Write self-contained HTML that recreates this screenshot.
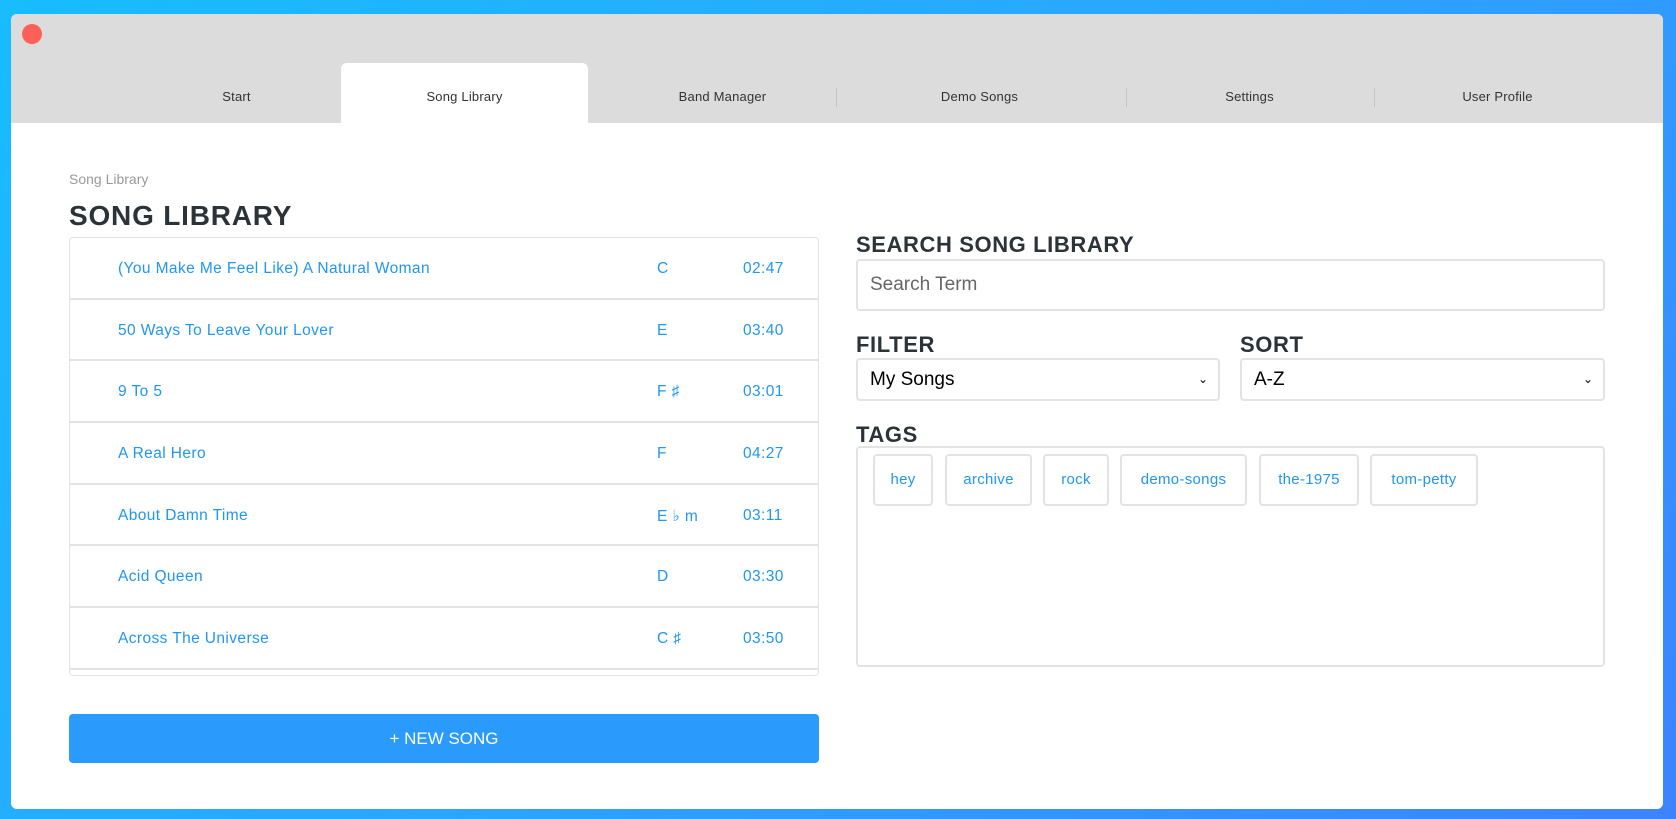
<!DOCTYPE html>
<html><head><meta charset="utf-8"><style>
*{box-sizing:border-box;margin:0;padding:0}
body{width:1676px;height:819px;overflow:hidden;background:linear-gradient(135deg,#18bcff 0%,#2aa6ff 50%,#3c84ff 100%);font-family:"Liberation Sans",sans-serif;position:relative}
.win{position:absolute;left:11px;top:14px;width:1652px;height:795px;background:#fff;border-radius:6px;overflow:hidden}
.hdr{position:absolute;left:0;top:0;width:100%;height:109px;background:#dcdcdc}
.dot{position:absolute;left:11px;top:10px;width:20px;height:20px;border-radius:50%;background:#fe5f57}
.tab{position:absolute;top:49px;height:60px;width:247px;text-align:center;line-height:68px;font-size:13px;color:#333;letter-spacing:.2px}
.tab.act{background:#fff;border-radius:6px 6px 0 0}
.sep{position:absolute;top:74px;height:19px;width:1px;background:#c4c4c4}
.abs{position:absolute}
.crumb{left:58px;top:157px;font-size:14px;color:#999}
h1{position:absolute;left:58px;top:186px;font-size:28px;font-weight:bold;color:#2c3338;letter-spacing:.8px}
.list{position:absolute;left:58px;top:223px;width:750px;height:439px;border:1px solid #e3e3e3;border-radius:4px;overflow:hidden}
.row{height:61.7px;border-bottom:2px solid #e3e3e3;position:relative;font-size:15.5px;color:#2196f3;letter-spacing:.4px}
.row span{position:absolute;top:22px}
.t{left:48px}.k{left:587px}.d{left:673px}
.btn{position:absolute;left:58px;top:700px;width:750px;height:49px;background:#2a9bfd;border-radius:4px;color:#fff;text-align:center;line-height:49px;font-size:17px}
h2{position:absolute;font-size:22px;font-weight:bold;color:#2c3338;letter-spacing:.6px}
.inp{position:absolute;border:2px solid #e3e3e3;border-radius:4px;font-size:19px;padding-left:12px}
.tag{position:absolute;top:440px;height:52px;border:2px solid #e3e3e3;border-radius:4px;color:#2196f3;font-size:15px;text-align:center;line-height:48px;letter-spacing:.3px}
.chev{position:absolute;right:10px;top:0;font-size:12px;color:#000}
</style></head><body>
<div class="win">
<div class="hdr">
<div class="dot"></div>
<div class="tab" style="left:102px">Start</div>
<div class="tab act" style="left:330px">Song Library</div>
<div class="tab" style="left:588px">Band Manager</div>
<div class="sep" style="left:825px"></div>
<div class="tab" style="left:845px">Demo Songs</div>
<div class="sep" style="left:1115px"></div>
<div class="tab" style="left:1115px">Settings</div>
<div class="sep" style="left:1363px"></div>
<div class="tab" style="left:1363px">User Profile</div>
</div>
<div class="abs crumb">Song Library</div>
<h1>SONG LIBRARY</h1>
<div class="list">
<div class="row"><span class="t">(You Make Me Feel Like) A Natural Woman</span><span class="k">C</span><span class="d">02:47</span></div>
<div class="row"><span class="t">50 Ways To Leave Your Lover</span><span class="k">E</span><span class="d">03:40</span></div>
<div class="row"><span class="t">9 To 5</span><span class="k">F ♯</span><span class="d">03:01</span></div>
<div class="row"><span class="t">A Real Hero</span><span class="k">F</span><span class="d">04:27</span></div>
<div class="row"><span class="t">About Damn Time</span><span class="k">E ♭ m</span><span class="d">03:11</span></div>
<div class="row"><span class="t">Acid Queen</span><span class="k">D</span><span class="d">03:30</span></div>
<div class="row"><span class="t">Across The Universe</span><span class="k">C ♯</span><span class="d">03:50</span></div>
</div>
<div class="btn">+ NEW SONG</div>
<h2 style="left:845px;top:218px">SEARCH SONG LIBRARY</h2>
<div class="inp" style="left:845px;top:245px;width:749px;height:52px;line-height:48px;color:#666">Search Term</div>
<h2 style="left:845px;top:318px">FILTER</h2>
<h2 style="left:1229px;top:318px">SORT</h2>
<div class="inp" style="left:845px;top:344px;width:364px;height:43px;line-height:39px;color:#000">My Songs<span class="chev">&#8964;</span></div>
<div class="inp" style="left:1229px;top:344px;width:365px;height:43px;line-height:39px;color:#000">A-Z<span class="chev">&#8964;</span></div>
<h2 style="left:845px;top:408px">TAGS</h2>
<div class="inp" style="left:845px;top:432px;width:749px;height:221px"></div>
<div class="tag" style="left:862px;width:60px">hey</div>
<div class="tag" style="left:934px;width:87px">archive</div>
<div class="tag" style="left:1032px;width:66px">rock</div>
<div class="tag" style="left:1109px;width:127px">demo-songs</div>
<div class="tag" style="left:1248px;width:100px">the-1975</div>
<div class="tag" style="left:1359px;width:108px">tom-petty</div>
</div>
</body></html>
